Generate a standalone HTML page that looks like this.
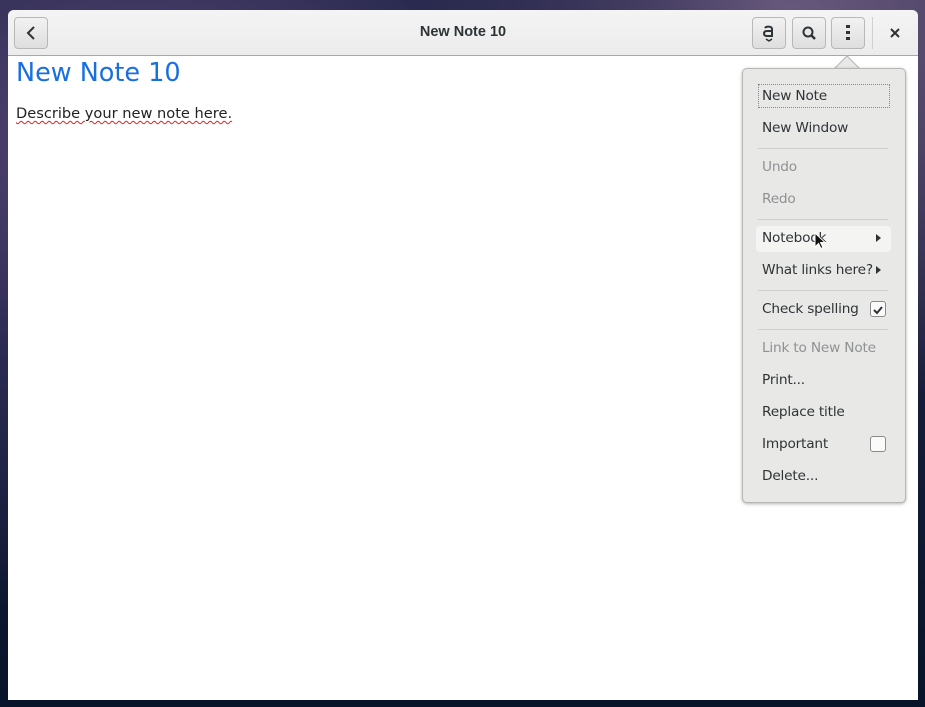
<!DOCTYPE html>
<html><head><style>
*{margin:0;padding:0;box-sizing:border-box}
body{width:925px;height:707px;overflow:hidden;position:relative;font-family:"DejaVu Sans","Liberation Sans",sans-serif;
background:radial-gradient(ellipse at 15% 20%,#5a4a78 0%,#2a2a50 30%,transparent 60%),radial-gradient(ellipse at 85% 5%,#6a5a80 0%,transparent 40%),linear-gradient(180deg,#2c2848 0%,#141c38 60%,#08142a 100%);}
.win{position:absolute;left:8px;top:10px;width:910px;height:690px;background:#fff;border-radius:6px 6px 0 0;overflow:hidden}
.hb{position:absolute;left:0;top:0;width:910px;height:46px;background:linear-gradient(#f4f4f4,#ececec);border-bottom:1px solid #a8a8a8}
.btn{position:absolute;top:7px;width:34px;height:32px;border:1px solid #b8b8b8;border-radius:4px;background:linear-gradient(#f2f2f2,#dedede)}
.title{position:absolute;left:0;width:910px;top:14px;text-align:center;font-size:14.5px;font-weight:bold;color:#2e3436;font-family:"Liberation Sans",sans-serif}
h1{position:absolute;left:8px;top:48px;font-size:25.5px;font-weight:normal;color:#1a6fe0}
.desc{position:absolute;left:8px;top:95px;font-size:14.6px;color:#222;text-decoration:underline wavy #e02020;text-decoration-thickness:1px;text-underline-offset:2px}
.menu{position:absolute;left:742px;top:68px;width:164px;height:435px;background:#e8e8e7;border:1px solid #b6b6b3;border-radius:5px;box-shadow:0 1px 3px rgba(0,0,0,.3)}
.arrow{position:absolute;left:838px;top:59px;width:18px;height:18px;background:#e8e8e7;border-left:1px solid #b6b6b3;border-top:1px solid #b6b6b3;transform:rotate(45deg)}
.it{position:absolute;left:19px;font-size:13.7px;color:#2e3436;letter-spacing:-0.2px}
.dis{color:#8f9292}
.sep{position:absolute;left:15px;width:130px;height:1px;background:#cfcfcd}
.tri{position:absolute;width:0;height:0;border-top:4px solid transparent;border-bottom:4px solid transparent;border-left:5px solid #2e3436}
.cb{position:absolute;left:127px;width:16px;height:16px;border:1px solid #8a8a8a;border-radius:3px;background:#fafafa}
</style></head><body>
<div class="win">
 <div class="hb">
  <div class="btn" style="left:6px"><svg width="32" height="30"><path d="M19 9l-6 6 6 6" stroke="#2e3436" stroke-width="2" fill="none"/></svg></div>
  <div class="title">New Note 10</div>
  <div class="btn" style="left:744px"><svg width="32" height="30"><path d="M12 10c1-2 7-2 7 1v7h-5c-2 0-3-1-3-2.5s1-2.5 3-2.5h5" stroke="#2e3436" stroke-width="2" fill="none"/><path d="M13 21l3 2 3-2" stroke="#2e3436" stroke-width="1.5" fill="none"/></svg></div>
  <div class="btn" style="left:784px"><svg width="32" height="30"><circle cx="15" cy="14" r="4.5" stroke="#2e3436" stroke-width="2" fill="none"/><path d="M18 17l4 4" stroke="#2e3436" stroke-width="2.5"/></svg></div>
  <div class="btn" style="left:823px"><svg width="32" height="30"><rect x="14" y="7" width="4" height="3" fill="#2e3436"/><rect x="14" y="13" width="4" height="3" fill="#2e3436"/><rect x="14" y="19" width="4" height="3" fill="#2e3436"/></svg></div>
  <div style="position:absolute;left:864px;top:7px;width:1px;height:32px;background:#d0d0d0"></div>
  <svg style="position:absolute;left:881px;top:17px" width="12" height="12"><path d="M2 2l8 8M10 2l-8 8" stroke="#2e3436" stroke-width="2"/></svg>
 </div>
 <h1>New Note 10</h1>
 <div class="desc">Describe your new note here.</div>
</div>
<div class="arrow"></div>
<div class="menu">
 <div style="position:absolute;left:15px;top:15px;width:132px;height:24px;border:1px dotted #888"></div>
 <div class="it" style="top:19px">New Note</div>
 <div class="it" style="top:51px">New Window</div>
 <div class="sep" style="top:79px"></div>
 <div class="it dis" style="top:90px">Undo</div>
 <div class="it dis" style="top:122px">Redo</div>
 <div class="sep" style="top:150px"></div>
 <div style="position:absolute;left:13px;top:157px;width:135px;height:26px;background:#f4f4f3;border-radius:4px"></div>
 <div class="it" style="top:161px">Notebook</div>
 <div class="tri" style="left:133px;top:165px"></div>
 <div class="it" style="top:193px">What links here?</div>
 <div class="tri" style="left:133px;top:197px"></div>
 <div class="sep" style="top:221px"></div>
 <div class="it" style="top:232px">Check spelling</div>
 <div class="cb" style="top:232px"><svg width="14" height="14"><path d="M3 7l3 3 5-6" stroke="#2e3436" stroke-width="2" fill="none"/></svg></div>
 <div class="sep" style="top:260px"></div>
 <div class="it dis" style="top:271px">Link to New Note</div>
 <div class="it" style="top:303px">Print...</div>
 <div class="it" style="top:335px">Replace title</div>
 <div class="it" style="top:367px">Important</div>
 <div class="cb" style="top:367px"></div>
 <div class="it" style="top:399px">Delete...</div>
</div>
<svg style="position:absolute;left:814px;top:232px" width="12" height="18"><path d="M1 1v14l3.5-3.5 2.5 5 2-1-2.5-5H11z" fill="#111" stroke="#fff" stroke-width="1"/></svg>
</body></html>
